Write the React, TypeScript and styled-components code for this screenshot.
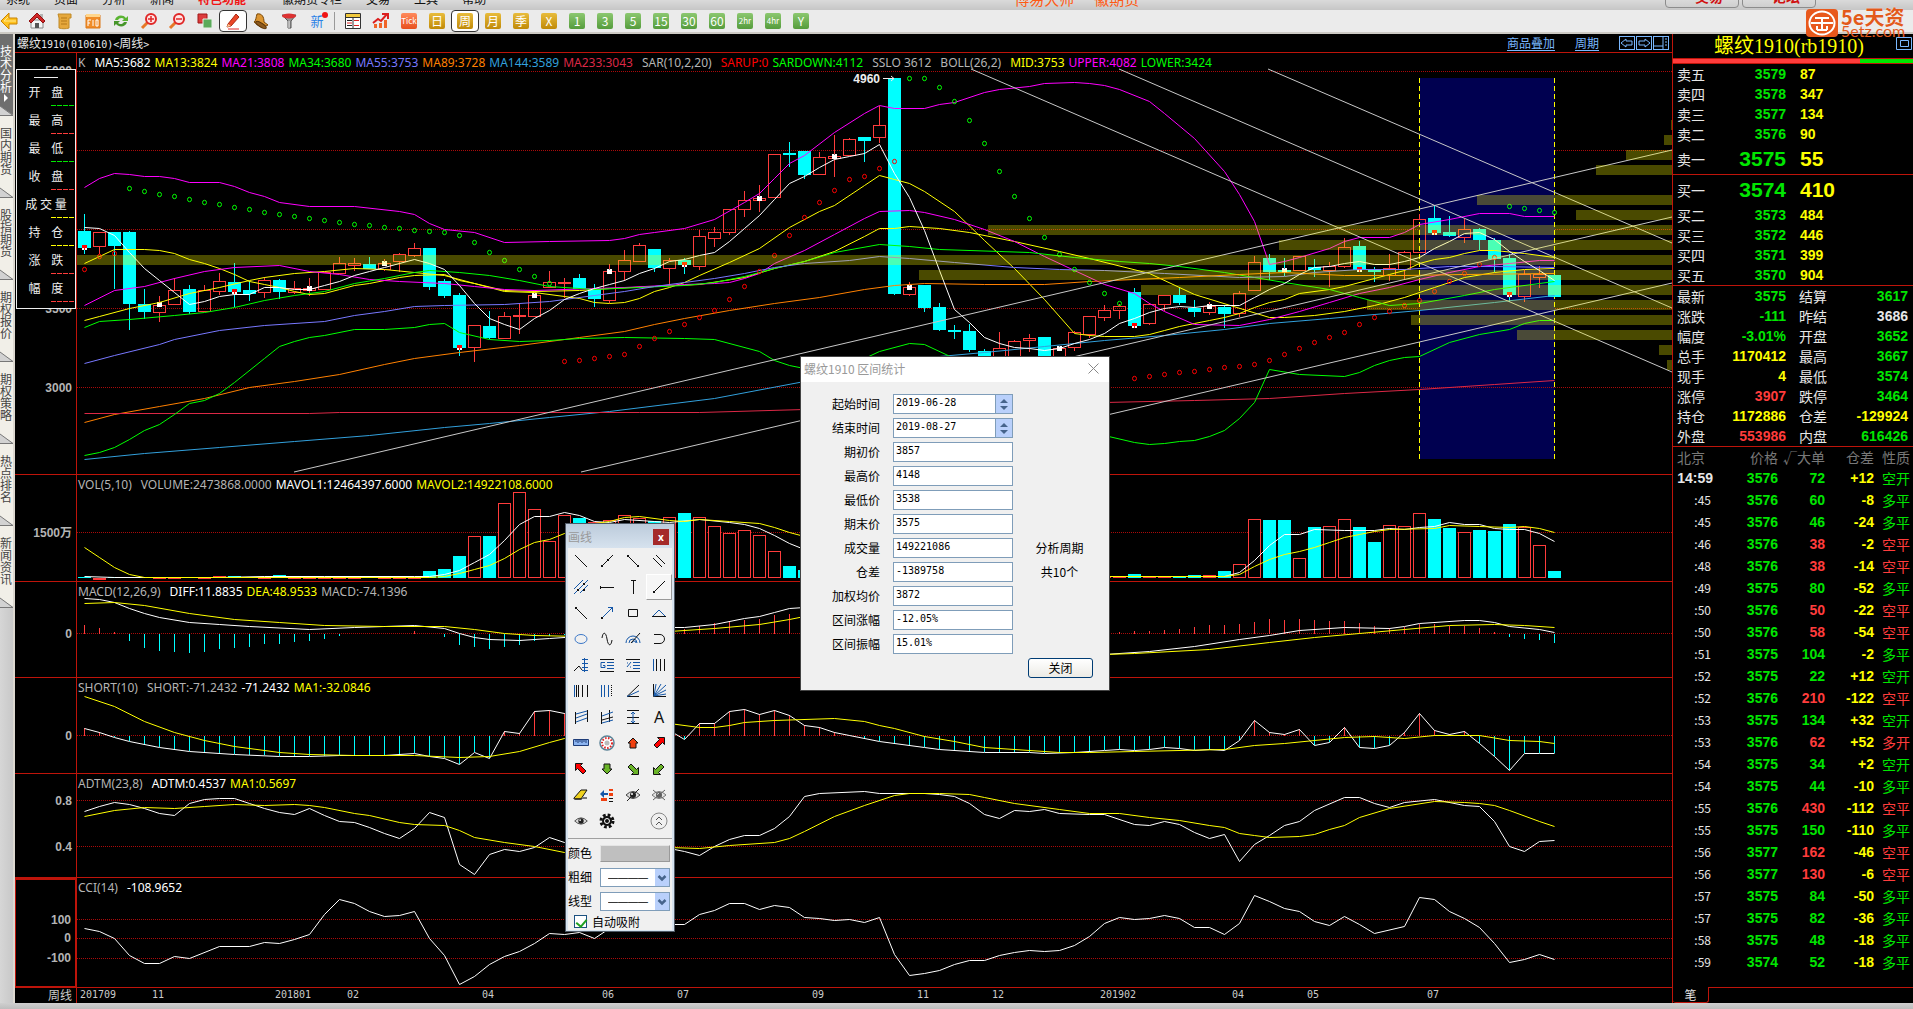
import React from "react";
import styled, { createGlobalStyle, css } from "styled-components";

const CJK = '"Noto Sans CJK SC", "Noto Sans", sans-serif';
const MONO = '"DejaVu Sans Mono", "Noto Sans CJK SC", monospace';
const LATIN = '"Noto Sans", "Noto Sans CJK SC", sans-serif';
const DIGITS = '"Liberation Sans", "Noto Sans CJK SC", sans-serif';

const RED = "#be140a";
const UP = "#ff3c3c";
const DOWN = "#00ffff";
const GREEN = "#00e600";
const YELLOW = "#ffff00";
const WHITE = "#e6e6e6";
const GREY = "#b4b4b4";
const BLUE = "#1457a8";

const Global = createGlobalStyle`
  * { box-sizing: border-box; }
  html, body, #root { height: 100%; }
  body { margin: 0; background: #c8c8c8; font: 12px/16px ${CJK}; overflow: hidden; }
  button, input, select { font: inherit; margin: 0; padding: 0; border-radius: 0; }
  svg { display: block; }
`;

/* ---------- shell ---------- */

const Shell = styled.div`
  position: relative;
  display: flex;
  flex-direction: column;
  height: 100vh;
  background: #c8c8c8;
`;

const Body = styled.div`
  display: flex;
  flex: 1;
  min-height: 0;
`;

const StatusBar = styled.footer`
  height: 6px;
  background: linear-gradient(#cfcfcf, #bdbdbd);
`;

/* ---------- menu ---------- */

const MenuBar = styled.nav`
  display: flex;
  align-items: flex-end;
  height: 10px;
  overflow: hidden;
  padding: 0 97px 3px 6px;
  background: linear-gradient(#dadada, #c6c6c6);
`;

const MenuItem = styled.a<{ $color?: string; $bold?: boolean; $gap?: number; $size?: number }>`
  flex: none;
  margin-right: ${(p) => p.$gap ?? 24}px;
  font-size: ${(p) => p.$size ?? 12}px;
  line-height: 16px;
  font-weight: ${(p) => (p.$bold ? 700 : 400)};
  color: ${(p) => p.$color ?? "#111"};
  text-decoration: none;
`;

const Brand = styled.div`
  display: flex;
  flex: 1;
  margin-left: 528px;
`;

const MenuButton = styled.button`
  flex: none;
  width: 74px;
  height: 22px;
  margin: 0 0 -1px 3px;
  border: 1px solid #8c8c8c;
  border-radius: 4px;
  background: linear-gradient(#eee, #cfcfcf);
  color: #d01010;
  font-size: 14px;
  font-weight: 700;
  line-height: 12px;
  padding: 0 0 2px 14px;
`;

/* ---------- toolbar ---------- */

const Toolbar = styled.div`
  display: flex;
  align-items: center;
  height: 24px;
  padding-bottom: 0;
  margin-left: -5px;
  background: #ebebeb;
  border-bottom: 2px solid #cdcac4;
`;

const ToolButton = styled.button<{ $on?: boolean }>`
  flex: none;
  display: grid;
  place-items: center;
  width: 28px;
  height: 22px;
  background: ${(p) => (p.$on ? "#fff" : "transparent")};
  border: ${(p) => (p.$on ? "1px solid #333" : "0")};
  border-radius: 4px;
`;

const badge = {
  red: "linear-gradient(#ff8a5c, #e8501e)",
  gold: "linear-gradient(#e8bc3c, #c08a08)",
  green: "linear-gradient(#8cc870, #559c3c)",
};

const Badge = styled.span<{ $tone: keyof typeof badge; $small?: boolean }>`
  width: 16px;
  height: 16px;
  border-radius: 2px;
  background: ${(p) => badge[p.$tone]};
  color: #fff;
  text-align: center;
  font: ${(p) => (p.$small ? 8 : 12)}px/16px ${CJK};
`;

const ToolSeparator = styled.span`
  flex: none;
  width: 1px;
  height: 18px;
  margin: 0 4px 0 3px;
  background: #999;
`;

/* ---------- sidebar ---------- */

const Sidebar = styled.nav`
  flex: none;
  width: 15px;
  border-right: 2px solid #dcd8d0;
  background: linear-gradient(90deg, #d6d6d6, #c8c8c8);
`;

const SideTab = styled.button<{ $on?: boolean }>`
  display: flex;
  flex-direction: column;
  align-items: flex-start;
  width: 13px;
  height: 82px;
  padding-top: 11px;
  border: 0;
  background: ${(p) => (p.$on ? "#6e6e6e" : "#f1efe8")};
  color: ${(p) => (p.$on ? "#fff" : "#444")};
  font-size: 12px;
  line-height: 12px;
  overflow: hidden;
  & > svg { flex: none; margin-top: auto; }
`;

/* ---------- chart ---------- */

const ChartArea = styled.main`
  display: grid;
  flex: 1;
  min-width: 0;
  grid-template-rows: 19px minmax(0, 422fr) minmax(0, 107fr) minmax(0, 96fr) minmax(0, 96fr) minmax(0, 104fr) minmax(0, 110fr) 15px;
  background: #000;
`;

const ChartHeader = styled.header`
  display: flex;
  align-items: center;
  padding: 0 2px;
  border-bottom: 1px solid ${RED};
  color: ${WHITE};
  white-space: nowrap;
`;

const ChartTitle = styled.h1`
  flex: 1;
  margin: 0;
  font: 12px/18px ${CJK};
`;

const Mono = styled.span`
  font: 10px/12px ${MONO};
`;

const HeaderLink = styled.a`
  margin-right: 20px;
  color: #7ab8ff;
  line-height: 14px;
  text-underline-offset: 2px;
`;

const NavButton = styled.button`
  width: 16px;
  height: 14px;
  margin-right: 1px;
  border: 1px solid #7ab8ff;
  background: transparent;
`;

const PanelRow = styled.section`
  display: grid;
  grid-template-columns: 62px minmax(0, 1fr);
  border-bottom: 1px solid ${RED};
  min-height: 0;
`;

const AxisCell = styled.div<{ $on?: boolean }>`
  position: relative;
  border-right: 1px solid ${RED};
  ${(p) => p.$on && css`border: 2px solid ${RED}; border-width: 2px 2px 1px 1px;`}
`;

const AxisLabel = styled.span`
  position: absolute;
  right: 4px;
  transform: translateY(-50%);
  color: ${GREY};
  font: 700 12px/14px ${DIGITS};
`;

const PlotCell = styled.div`
  position: relative;
  min-width: 0;
  min-height: 0;
`;

const Plot = styled.svg`
  position: absolute;
  inset: 0;
  width: 100%;
  height: 100%;
`;

const Legend = styled.p`
  position: relative;
  display: flex;
  gap: 4px;
  margin: 0;
  padding-left: 1px;
  font: 12px/19px ${LATIN};
  white-space: nowrap;
`;

const LegendItem = styled.span<{ $color: string; $wide?: boolean }>`
  color: ${(p) => p.$color};
  margin-right: ${(p) => (p.$wide ? 5 : 0)}px;
`;

const TimeRow = styled.div`
  display: grid;
  grid-template-columns: 62px minmax(0, 1fr);
  color: #ccc;
`;

const TimeUnit = styled.div`
  border-right: 1px solid ${RED};
  padding-right: 4px;
  text-align: right;
  line-height: 14px;
`;

const TimeScale = styled.div`
  position: relative;
`;

const TimeLabel = styled.span`
  position: absolute;
  top: 0;
  font: 10px/14px ${MONO};
`;

/* Floating read-out for the bar under the cursor */
const Readout = styled.aside`
  position: absolute;
  z-index: 2;
  left: 16px;
  top: 69px;
  width: 60px;
  height: 240px;
  border: 1px solid #eee;
  background: #000;
  color: #eee;
`;

const ReadoutDate = styled.div`
  height: 8px;
  margin: 0 17px;
  border-bottom: 1px solid #eee;
`;

const ReadoutRow = styled.div<{ $color: string }>`
  position: relative;
  height: 28px;
  line-height: 28px;
  text-align: center;
  white-space: pre;
  &::after {
    content: "";
    position: absolute;
    right: 0;
    bottom: 0;
    width: 24px;
    height: 1px;
    background: repeating-linear-gradient(90deg, ${(p) => p.$color} 0 5px, #000 5px 6px);
  }
`;

/* ---------- quotes ---------- */

const QuotePanel = styled.aside`
  display: flex;
  flex-direction: column;
  flex: none;
  width: 241px;
  border-left: 1px solid ${RED};
  background: #000;
  color: ${WHITE};
`;

const QuoteTitle = styled.h2`
  display: flex;
  align-items: center;
  justify-content: flex-end;
  gap: 32px;
  height: 25px;
  margin: 0;
  border-bottom: 1px solid ${RED};
  color: ${YELLOW};
  font: 20px/24px "Liberation Serif", "Noto Sans CJK SC", serif;
  & > svg { margin-top: -6px; }
`;

const RatioBar = styled.div`
  display: flex;
  height: 5px;
  border-bottom: 1px solid ${RED};
  background: ${GREEN};
`;

const RatioSell = styled.div`
  width: 78%;
  background: ${UP};
`;

const Table = styled.table`
  width: 100%;
  table-layout: fixed;
  border-collapse: collapse;
`;

const BookTable = styled(Table)`
  border-bottom: 1px solid ${RED};
`;

const Cell = styled.td<{ $color?: string; $left?: boolean; $pad?: number; $big?: boolean; $tall?: boolean }>`
  height: ${(p) => (p.$big ? 30 : p.$tall ? 22 : 20)}px;
  padding: 0 0 0 ${(p) => p.$pad ?? 0}px;
  color: ${(p) => p.$color ?? WHITE};
  font: 700 ${(p) => (p.$big ? 21 : 14)}px/20px ${DIGITS};
  text-align: ${(p) => (p.$left ? "left" : "right")};
`;

const EndCell = styled(Cell)`
  padding-right: 5px;
`;

const HeadCell = styled.th<{ $left?: boolean; $pad?: number; $dim?: boolean }>`
  padding: 0 0 0 ${(p) => p.$pad ?? 4}px;
  color: ${(p) => (p.$dim ? "#787878" : WHITE)};
  font: 400 14px/20px ${CJK};
  text-align: ${(p) => (p.$left ? "left" : "right")};
  white-space: nowrap;
`;

const TimeCell = styled.td`
  padding: 0 2px 0 0;
  font: 12px/22px ${CJK};
  text-align: right;
`;

const KindCell = styled.td<{ $color: string }>`
  padding: 0 0 0 8px;
  color: ${(p) => p.$color};
  font: 14px/20px ${CJK};
`;

const QuoteTabs = styled.div`
  display: flex;
  height: 16px;
  margin-top: auto;
`;

const QuoteTab = styled.button`
  width: 36px;
  border: 1px solid ${RED};
  border-width: 0 1px 1px 0;
  border-radius: 0 0 3px 3px;
  background: #000;
  color: ${WHITE};
  font-size: 12px;
  line-height: 14px;
`;

const TabRule = styled.div`
  flex: 1;
  border-top: 1px solid ${RED};
`;

/* ---------- logo ---------- */

const Logo = styled.div`
  position: absolute;
  z-index: 3;
  top: 9px;
  right: 5px;
  display: flex;
  gap: 3px;
  color: #e25a1c;
`;

const LogoText = styled.div`
  width: 67px;
  white-space: nowrap;
  font: 700 20px/16px ${CJK};
  text-shadow: 0 0 1px #fff;
`;

const LogoUrl = styled.div`
  font: 16px/12px "Lato", sans-serif;
`;

/* ---------- drawing palette ---------- */

const Palette = styled.aside`
  position: absolute;
  z-index: 4;
  left: 565px;
  top: 523px;
  width: 110px;
  border: 1px solid #4f5a66;
  background: #d6e2ee;
  padding: 0 2px 1px;
  color: #000;
`;

const PaletteTitle = styled.header`
  display: flex;
  align-items: center;
  justify-content: space-between;
  height: 24px;
  padding: 1px 5px 0 2px;
  margin: 0 -2px;
  background: linear-gradient(#bccbdb, #d6e2ee);
  color: #999;
`;

const PaletteClose = styled.button`
  width: 16px;
  height: 16px;
  border: 0;
  background: #a52a2a;
  color: #fff;
  font: 700 10px/14px ${LATIN};
`;

const PaletteBody = styled.div`
  background: #f0f0f0;
`;

const ToolGrid = styled.div`
  display: grid;
  grid-template-columns: repeat(4, 26px);
  grid-auto-rows: 26px;
  margin-bottom: 2px;
  border-bottom: 1px solid #a0a0a0;
  height: 291px;
`;

const DrawButton = styled.button<{ $on?: boolean }>`
  display: grid;
  place-items: center;
  border: 1px solid transparent;
  background: transparent;
  ${(p) => p.$on && css`border-color: #fff #999 #999 #fff; background: #f6f6f6;`}
`;

const Field = styled.label`
  display: flex;
  align-items: center;
  justify-content: space-between;
  height: 24px;
  padding-right: 2px;
`;

const Swatch = styled.button`
  width: 70px;
  height: 17px;
  border: 1px solid #aaa;
  border-color: #e4e4e4 #999 #999 #e4e4e4;
  background: #bfbfbf;
`;

const SelectBox = styled.span`
  position: relative;
  width: 70px;
  height: 19px;
  & > select {
    appearance: none;
    width: 100%;
    height: 100%;
    padding-left: 7px;
    border: 1px solid #7f9db9;
    background: #fff;
    font: 10px/17px "Liberation Sans", sans-serif;
    color: #000;
  }
  & > svg {
    position: absolute;
    top: 1px;
    right: 1px;
    pointer-events: none;
  }
`;

const CheckField = styled.label`
  display: flex;
  align-items: center;
  gap: 5px;
  height: 17px;
  padding-left: 6px;
  & > input {
    appearance: none;
    position: relative;
    width: 13px;
    height: 13px;
    border: 1px solid #1c5180;
    background: #fff;
  }
  & > input:checked::after {
    content: "";
    position: absolute;
    left: 3px;
    top: 1px;
    width: 5px;
    height: 8px;
    border: solid #21a121;
    border-width: 0 2px 2px 0;
    transform: rotate(40deg);
  }
`;

/* ---------- interval dialog ---------- */

const Dialog = styled.section`
  position: absolute;
  z-index: 5;
  left: 800px;
  top: 356px;
  width: 310px;
  border: 1px solid #444;
  background: #f0f0f0;
  color: #000;
`;

const DialogTitle = styled.header`
  display: flex;
  align-items: center;
  justify-content: space-between;
  height: 25px;
  padding: 0 10px 2px 3px;
  background: #fff;
  color: #999;
`;

const CloseButton = styled.button`
  border: 0;
  background: transparent;
`;

const DialogForm = styled.form`
  padding: 12px 16px 12px 0;
`;

const FormGrid = styled.div`
  display: grid;
  grid-template-columns: 79px 120px 1fr;
  grid-auto-rows: 20px;
  gap: 4px 13px;
  align-items: center;
`;

const FormLabel = styled.label`
  text-align: right;
`;

const FormField = styled.div`
  display: flex;
  height: 20px;
  border: 1px solid #7f9db9;
  background: #fff;
  & > input {
    flex: 1;
    min-width: 0;
    border: 0;
    padding: 0 0 2px 2px;
    background: transparent;
    font: 10px/16px ${MONO};
  }
`;

const Spinner = styled.button`
  width: 17px;
  border: 0;
  border-left: 1px solid #7f9db9;
  background: #b9d0fb;
`;

const Side = styled.span`
  text-align: center;
`;

const DialogActions = styled.div`
  display: flex;
  justify-content: flex-end;
  padding-top: 4px;
`;

const OkButton = styled.button`
  width: 65px;
  height: 20px;
  border: 1px solid #003c74;
  border-radius: 3px;
  background: linear-gradient(#fff, #ecebe5);
  line-height: 16px;
`;

/* ---------- chart data ---------- */

/* Bars are 15 units apart; the plot coordinates start at x = 77. */
const X0 = 84.5;
const STEP = 15;
const bx = (i: number) => X0 + STEP * i;
const parse = (s: string) => s.trim().split(/\s+/).map((p) => p.split(",").map(Number));

/* one bar: direction, body top, body bottom, high, low */
const CANDLES = `d231,248,214,254 u232,246,232,254 d232,246,232,289 d232,304,231,330 d304,312,289,319 u305,312,296,322 u290,304,278,304 d289,312,285,314 u290,311,285,311 u281,291,273,295
d282,292,263,307 d290,294,281,301 u280,292,277,298 d280,292,279,299 u288,292,281,294 u288,290,278,296 u272,289,272,289 u263,273,257,274 u263,265,258,271 d264,269,257,269
u263,269,259,271 u254,261,253,272 u248,255,243,257 d248,287,248,290 d281,296,279,298 d295,348,293,356 u325,347,325,362 d326,338,311,339 u316,338,312,339 u315,316,303,334
u295,316,290,316 u282,287,271,288 u282,283,278,298 d278,289,274,289 d289,299,284,307 u271,300,264,303 u260,271,250,281 u245,261,243,261 d249,268,249,272 u260,268,258,286
d260,265,258,274 u236,266,230,270 u232,238,227,247 u209,232,209,235 u200,209,191,217 u198,200,185,212 u154,197,154,197 d153,155,142,167 d151,175,151,179 u157,174,152,174
u156,158,135,177 u139,155,138,155 d137,141,137,162 u125,137,106,143 d78,294,78,295 u287,294,282,296 d285,308,285,312 d307,330,303,331 d330,331,325,339 d331,350,324,352
d351,372,349,375 u348,372,332,374 u341,360,340,372 u338,340,334,352 d337,372,337,374 u348,362,346,364 u332,347,331,351 u316,334,316,338 u310,317,305,321 u306,310,304,319
d292,326,288,327 u304,323,303,325 u295,304,295,311 d295,303,288,305 d308,312,300,317 u306,312,302,315 d307,314,305,328 u293,313,291,317 u262,290,256,290 d258,272,254,280
d270,271,258,276 u256,270,256,270 d267,270,259,277 u266,270,262,287 u247,266,238,268 d246,270,241,272 d270,272,267,282 u268,275,254,281 u252,269,251,279 u219,252,214,252
d218,233,205,233 d232,236,216,237 u229,237,219,243 d229,240,228,250 d240,259,238,272 d258,295,254,302 u274,296,270,302 u274,277,266,288 d275,297,275,297`
  .trim()
  .split(/\s+/)
  .map((s) => ({ up: s[0] === "u", v: s.slice(1).split(",").map(Number) }));

const PRICE_LINES: [string, string][] = [
  [YELLOW, "0,263 1,256 2,249 4,249 5,250 6,253 7,259 8,263 9,268 10,274 11,281 12,284 13,287 14,291 15,294 16,293 17,289 18,285 19,283 20,280 21,277 22,275 24,274 25,280 26,283 27,287 28,291 30,292 32,296 33,298 34,302 35,303 36,302 37,298 38,291 39,287 40,282 41,275 43,262 45,248 47,227 49,211 50,205 52,185 53,175 54,179 55,183 56,191 58,211 60,240 62,268 64,299 66,333 67,335 68,336 70,336 71,334 72,330 73,326 74,323 75,320 76,317 77,313 78,307 79,302 80,299 81,293 83,289 84,286 86,278 87,274 88,270 89,263 90,259 91,257 92,253 93,250 94,250 96,253 98,257"],
  [YELLOW, "0,320 1,316 3,308 5,302 7,293 9,287 11,280 12,277 14,273 16,271 18,268 20,269 22,272 24,275 26,283 28,290 30,291 33,290 35,288 38,286 41,284 44,277 46,268 48,261 50,251 52,236 53,228 54,228 55,226 57,228 59,232 62,241 65,251 67,258 71,273 74,294 79,317 80,317 82,315 84,311 86,305 88,297 90,287 92,277 94,272 96,269 98,268"],
  ["#ff00ff", "0,305 2,290 4,286 6,278 8,271 10,267 13,265 15,271 17,274 19,279 21,281 24,283 26,286 28,289 30,290 36,287 40,284 42,283 43,282 44,278 45,273 46,263 48,250 50,234 52,218 53,211 55,210 56,212 58,219 60,229 62,241 64,256 66,270 68,284 70,293 71,303 72,311 74,324 77,325 79,319 81,311 83,302 85,293 87,287 89,279 91,272 93,266 95,263 97,260 98,260"],
  ["#ff00ff", "0,187 1,178 2,173 3,174 4,176 5,176 6,178 7,182 9,182 10,186 11,192 12,196 13,202 15,206 18,206 21,211 22,214 23,223 24,229 26,232 28,242 31,241 35,240 36,238 37,234 38,232 40,228 42,219 44,202 45,193 46,178 47,163 48,155 50,132 52,113 53,105 54,108 56,108 57,104 58,102 60,92 61,89 63,86 64,83 66,82 67,83 68,85 69,89 71,101 72,113 74,138 76,171 77,194 78,221 79,264 80,261 81,257 83,248 84,241 85,237 87,237 88,232 89,224 91,219 93,213 95,213 96,216 98,216"],
  ["#00ff00", "0,327 1,321 3,319 6,315 8,312 10,307 12,300 14,295 16,291 18,283 20,278 22,272 23,270 25,272 27,275 29,280 31,286 34,289 37,287 40,285 42,282 44,276 46,268 48,261 50,252 53,244 55,246 57,249 61,251 63,252 66,257 69,261 71,263 73,266 76,272 78,277 80,282 83,289 85,297 87,305 89,303 92,295 94,289 97,283 98,281"],
  ["#7878ff", "0,363 2,355 5,344 6,339 9,330 12,325 16,321 18,315 20,311 22,306 24,305 28,304 31,301 34,295 36,291 38,286 40,282 42,278 44,273 46,267 48,263 51,260 53,256 55,258 58,262 62,267 65,269 68,270 72,273 77,277 80,276 82,272 85,269 88,269 91,266 94,266 98,267"],
  ["#ff8000", "0,422 2,414 5,406 8,398 11,387 14,381 17,374 20,364 22,358 25,352 29,345 33,337 36,331 38,324 40,318 43,310 46,303 49,297 52,289 54,285 56,283 60,284 64,284 67,281 73,277 77,274 80,272 84,275 88,275 92,274 98,273"],
  ["#32a0dc", "0,459 4,453 9,447 14,441 19,435 24,427 27,423 31,417 35,411 42,398 48,381 57,356 60,352 64,346 68,340 72,335 76,329 79,323 83,318 89,310 94,302 98,295"],
  ["#dc2846", "0,413 15,413 17,412 37,412 41,412 48,409 68,402 74,400 79,398 84,393 89,389 94,384 98,380"],
  ["#00ff00", "0,455 1,452 2,447 3,439 4,430 5,424 6,414 7,403 8,400 9,393 10,382 12,358 13,346 14,341 15,337 16,335 18,329 20,329 22,327 23,324 24,323 25,332 27,339 29,341 31,340 33,338 36,337 40,338 42,339 45,351 46,360 47,365 48,368 50,366 52,358 53,351 55,343 56,344 58,358 62,385 66,420 68,435 70,442 71,444 72,443 73,441 74,440 75,436 76,430 77,418 78,402 79,369 81,374 84,376 85,372 86,365 87,360 88,357 89,356 91,342 93,334 95,329 96,323 97,320 98,320"],
  ["#ffffff", "0,227 1,228 2,235 3,252 4,268 5,280 6,292 7,304 8,301 9,296 10,294 11,294 12,287 13,287 14,289 15,289 16,285 17,281 18,275 19,271 20,267 21,263 22,259 23,263 24,269 25,285 26,303 27,318 28,324 29,329 30,318 31,310 32,299 33,293 34,288 35,284 36,280 37,273 38,268 39,261 40,259 41,255 42,252 43,241 44,228 45,215 46,199 47,183 48,176 49,167 50,159 51,156 52,153 53,144 54,173 55,197 56,230 57,270 58,309 59,322 60,337 61,343 62,347 63,348 64,350 65,348 66,343 67,339 68,333 69,323 70,318 71,312 72,308 73,306 74,307 75,305 77,305 78,297 79,289 80,283 81,274 82,267 83,266 84,263 85,261 86,264 87,264 88,261 89,257 90,248 91,241 92,233 93,232 94,239 95,251 96,261 97,270 98,280"],
];

/* Parabolic stop values per run: start bar, side, heights */
const SAR: [number, string, number[]][] = [
  [0, "#ff0000", [269, 256, 253]],
  [3, "#00ff00", [188, 191, 194, 196, 199, 202, 204, 207, 209, 212, 214, 216, 218, 220, 222, 224, 225, 227, 228, 230, 231, 232, 235, 242, 252, 260, 269, 276, 283]],
  [32, "#ff0000", [361, 360, 358, 356, 354, 346, 338, 331, 324, 317, 310, 299, 286, 271, 255, 235, 217, 202, 190, 179, 176, 168, 161]],
  [55, "#00ff00", [78, 78, 87, 101, 120, 143, 171, 196, 218, 237, 254, 269, 282, 293, 303]],
  [70, "#ff0000", [378, 376, 374, 372, 371, 369, 367, 366, 364, 360, 354, 348, 342, 337, 332, 324, 317, 311, 305, 300, 291, 281, 273, 264, 257]],
  [95, "#00ff00", [206, 208, 210, 212]],
];

const MARKS: [number, number, boolean][] = [
  [0, 247, true], [5, 304, false], [10, 291, true], [15, 288, false], [20, 263, false], [30, 295, false], [25, 347, true],
  [35, 271, false], [40, 264, true], [45, 198, false], [50, 156, false], [55, 287, false], [65, 348, false],
  [70, 325, true], [75, 306, false], [80, 270, false], [85, 269, true], [90, 232, true], [95, 294, true],
];

/* Volume profile: left edge and top of each stripe */
const PROFILE = [
  [1671, 120], [1664, 135], [1626, 150], [1596, 165], [1477, 195], [1576, 210], [988, 225], [1279, 240],
  [77, 255], [919, 270], [1141, 285], [1367, 300], [1411, 315], [1517, 330], [1659, 345], [1667, 360],
];

const TRENDS = [
  [294, 472, 1672, 150], [581, 472, 1672, 217], [863, 472, 1672, 283],
  [971, 69, 1672, 372], [1119, 69, 1672, 308], [1268, 69, 1672, 243],
];

const VOLUME = `d577 u578 d577 d577 d577 u577 u577 d577 u577 u576 d576 d577 u577 d575 u577 u577 u577 u577 u577 d577 u577 u577 u577 d571 d569 d556 u536 d536 u503 u492 u509 u541 u515 d518 u522 u520 u515 u518 d521 u517 d513 u517 u526 u533 u530 u535 u551 d566 d570 u572
u574 d574 u575 u575 d575 u576 d576 u576 d576 u576 d576 u576 d576 u576 d576 u576 u576 u576 u576 u576 d574 u576 u576 d576 d575 u575 d571 u564 u519 d520 d520 u558 d527 u526 u519 d527 d542 u525 u526 u513 d519 d528 u532 d530 d531 d524 u527 u545 d571`
  .trim()
  .split(/\s+/)
  .map((s) => ({ up: s[0] === "u", y: Number(s.slice(1)) }));

const MACD_BARS = [625, 628, 632, 641, 648, 651, 652, 653, 652, 649, 648, 647, 644, 644, 642, 641, 639, 636, 634, 634, 634, 634, 631, 634, 637, 645, 647, 649, 647, 645, 641, 636, 635, 635, 635, 634, 633, 632, 631, 630, 629, 626, 623, 622, 620, 619, 615, 614, 614, 614, 615, 617, 620, 622, 630, 640, 645, 648, 650, 652, 652, 650, 648, 646, 644, 642, 640, 636, 633, 632, 631, 631, 630, 629, 627, 625, 625, 624, 622, 619, 620, 619, 620, 621, 621, 623, 626, 628, 627, 624, 624, 626, 626, 628, 632, 637, 639, 640, 643];

const SHORT_LINE = "0,728 1,732 2,737 3,741 5,747 7,751 10,754 13,756 15,756 17,755 20,755 22,753 23,756 24,758 25,764 26,752 27,758 28,731 29,733 30,711 31,710 32,713 34,720 37,722 39,730 40,739 41,723 42,723 43,711 44,709 45,714 46,710 47,715 48,725 49,727 50,732 51,735 53,741 56,747 57,749 60,752 63,752 64,753 66,752 68,750 69,749 70,750 71,749 72,747 73,748 74,750 75,749 76,750 77,740 78,720 79,732 80,734 81,729 82,745 83,742 84,727 85,747 86,748 87,745 88,732 89,713 90,730 91,734 92,731 93,743 94,756 95,770 96,753 97,753 98,753";

/* Linear interpolation between the stored vertices */
function valueAt(points: number[][], i: number) {
  const k = points.findIndex((p) => p[0] >= i);
  if (k <= 0) return points[0][1];
  const [a, b] = [points[k - 1], points[k]];
  return a[1] + ((b[1] - a[1]) * (i - a[0])) / (b[0] - a[0]);
}

const TIMES: [number, string][] = [
  [80, "201709"], [152, "11"], [275, "201801"], [347, "02"], [482, "04"], [602, "06"], [677, "07"], [812, "09"],
  [917, "11"], [992, "12"], [1100, "201902"], [1232, "04"], [1307, "05"], [1427, "07"],
];

/* ---------- chart drawing ---------- */

const LEFT = 77;
const SPAN = 1595;

const Line = ({ color, data }: { color: string; data: string }) => (
  <polyline fill="none" stroke={color} points={parse(data).map(([i, y]) => `${bx(i)},${y + 0.5}`).join(" ")} />
);

const Bar = ({ i, y, base, up }: { i: number; y: number; base: number; up: boolean }) =>
  up ? (
    <rect x={bx(i) - 6} y={y + 0.5} width={12} height={Math.max(1, base - y - 1)} fill="#000" stroke={UP} />
  ) : (
    <rect x={bx(i) - 6.5} y={y} width={13} height={Math.max(1, base - y)} fill={DOWN} />
  );

const Stem = ({ i, y, base }: { i: number; y: number; base: number }) => (
  <line x1={bx(i)} x2={bx(i)} y1={base} y2={y} stroke={y < base ? UP : DOWN} />
);

type PanelProps = {
  top: number;
  height: number;
  axis?: [number, string][];
  grid: number[];
  legend: [string, string, boolean?][];
  active?: boolean;
  children?: React.ReactNode;
};

const Panel = ({ top, height, axis = [], grid, legend, active, children }: PanelProps) => (
  <PanelRow>
    <AxisCell $on={active}>
      {axis.map(([y, text]) => (
        <AxisLabel key={text} style={{ top: `${((y - top) / height) * 100}%` }}>{text}</AxisLabel>
      ))}
    </AxisCell>
    <PlotCell>
      <Plot viewBox={`${LEFT} ${top} ${SPAN} ${height}`} preserveAspectRatio="none" aria-hidden="true">
        {grid.map((y) => (
          <line key={y} x1={LEFT} x2={LEFT + SPAN} y1={y + 0.5} y2={y + 0.5} stroke="#aa0a0a" strokeDasharray="1 1" shapeRendering="crispEdges" />
        ))}
        {children}
      </Plot>
      <Legend>
        {legend.map(([text, color, wide]) => (
          <LegendItem key={text} $color={color} $wide={wide}>{text}</LegendItem>
        ))}
      </Legend>
    </PlotCell>
  </PanelRow>
);

const PricePlot = () => (
  <>
    <rect x={1420} y={78} width={135} height={381} fill="#000050" />
    <g stroke={YELLOW} strokeDasharray="5 3" shapeRendering="crispEdges">
      <line x1={1419.5} x2={1419.5} y1={78} y2={459} />
      <line x1={1554.5} x2={1554.5} y1={78} y2={459} />
    </g>
    <line x1={LEFT} x2={LEFT + SPAN} y1={387.5} y2={387.5} stroke="#aa0a0a" strokeDasharray="1 1" shapeRendering="crispEdges" />
    <g shapeRendering="crispEdges">
      {CANDLES.map(({ up, v: [t, b, hi, lo] }, i) => (
        <g key={i}>
          <line x1={bx(i)} x2={bx(i)} y1={hi} y2={t} stroke={up ? UP : DOWN} />
          <line x1={bx(i)} x2={bx(i)} y1={b} y2={lo} stroke={up ? UP : DOWN} />
          {up ? (
            <rect x={bx(i) - 6} y={t + 0.5} width={12} height={Math.max(1, b - t)} fill="none" stroke={UP} />
          ) : (
            <rect x={bx(i) - 6.5} y={t} width={13} height={Math.max(2, b - t)} fill={DOWN} />
          )}
        </g>
      ))}
      {MARKS.map(([i, y, red]) => (
        <g key={i}>
          <rect x={bx(i) - 2.5} y={y - 2} width={5} height={5} fill="#fff" />
          <rect x={bx(i) - 0.5} y={y + (red ? 1 : -2)} width={1} height={red ? 2 : 1} fill={red ? "#f00" : "#777"} />
          {red && <rect x={bx(i) - 2.5} y={y - 2} width={5} height={3} fill="#f00" />}
        </g>
      ))}
    </g>
    {PRICE_LINES.map(([color, data], k) => <Line key={k} color={color} data={data} />)}
    {SAR.map(([start, color, ys]) =>
      ys.map((y, k) => <ellipse key={`${start}-${k}`} cx={bx(start + k)} cy={y + 0.5} rx={2} ry={2.2} fill="none" stroke={color} />)
    )}
    <g stroke="#c8c8c8">
      {TRENDS.map(([x1, y1, x2, y2]) => <line key={`${x1}-${y2}`} x1={x1} y1={y1} x2={x2} y2={y2} />)}
    </g>
    <g fill="#ffff00" fillOpacity={0.29}>
      {PROFILE.map(([x, y]) => <rect key={y} x={x} y={y} width={1672 - x} height={10} />)}
    </g>
    <text x={880} y={83} textAnchor="end" fill="#eee" fontFamily="Liberation Sans, sans-serif" fontWeight={700} fontSize={12}>4960</text>
    <path d="M883 78.5h11M891 76l3 2.5-3 2.5" fill="none" stroke="#eee" />
  </>
);

const shortPoints = parse(SHORT_LINE);

/* ---------- toolbar icons ---------- */

const Icon = ({ children, size = 18 }: { children: React.ReactNode; size?: number }) => (
  <svg width={size} height={size} viewBox="0 0 18 18" aria-hidden="true">{children}</svg>
);

const toolIcons: [string, React.ReactNode][] = [
  ["后退", <><path d="M9 1 1 9l8 8v-5h8V6H9z" fill="#ffc21e" stroke="#c88200" /><path d="M8 5 4 9h12" stroke="#ffe890" fill="none" /></>],
  ["首页", <><path d="M3 8h12v8H3z" fill="#f4f4f4" stroke="#888" /><path d="M12 2h3v4h-3z" fill="#b4b4b4" /><path d="M1 9 9 1l8 8-2 2-6-6-6 6z" fill="#d02828" stroke="#901010" /><path d="M7 11h4v5H7z" fill="#555" /></>],
  ["公告", <><path d="M2 2h13v4h-2v10c-3 1-7 1-10 0V6z" fill="#e6a83c" stroke="#c08a28" /><path d="M5 6h6M5 9h6M5 12h6" stroke="#b47818" /></>],
  ["F10", <><path d="M2 3h14v13H2z" fill="#f08c28" stroke="#dc7818" /><path d="M2 2h14v3H2z" fill="#ffd68c" /><path d="M4 8v6M4 8h3M4 11h2M9 8v6M12 8h2v6h-2z" stroke="#fff" fill="none" /></>],
  ["刷新", <><path d="M3 8c1-5 8-6 11-2l2-2v5h-6l2-2c-2-2-5-1-6 1z" fill="#5ab432" /><path d="M15 10c-1 5-8 6-11 2l-2 2V9h6l-2 2c2 2 5 1 6-1z" fill="#46962a" /></>],
  ["放大", <><path d="m8 10-6 6" stroke="#e67828" strokeWidth="3" /><circle cx="11" cy="7" r="5" fill="#ffe6e6" stroke="#e02828" strokeWidth="2" /><path d="M8 7h6M11 4v6" stroke="#e02828" strokeWidth="1.5" /></>],
  ["缩小", <><path d="m8 10-6 6" stroke="#e67828" strokeWidth="3" /><circle cx="11" cy="7" r="5" fill="#ffe6e6" stroke="#e02828" strokeWidth="2" /><path d="M8 7h6" stroke="#e02828" strokeWidth="1.5" /></>],
  ["叠加", <><path d="M2 2h9v9H2z" fill="#dc3c3c" stroke="#a01818" /><path d="M7 7h9v9H7z" fill="#5aaa5a" stroke="#e6f0e6" /></>],
  ["画线", <><path d="M4 12 12 2l3 3-8 9-4 1z" fill="#eb4628" stroke="#a82810" /><path d="m4 12 3 2-4 1z" fill="#ffd29c" /><path d="M4 17h11" stroke="#e02828" /></>],
  ["预警", <><path d="M5 2c5-1 7 3 7 8l4 3-6 3-8-6c2-1 2-5 3-8z" fill="#dc9632" stroke="#7a4808" /><ellipse cx="9" cy="13" rx="6" ry="2" transform="rotate(32 9 13)" fill="#8c5a1e" stroke="#5a3408" /></>],
  ["筛选", <><path d="M2 3h14l-5 6v7H8V9z" fill="#969696" stroke="#555" /><ellipse cx="9" cy="4" rx="7" ry="2.5" fill="#dc3232" /><path d="M9 9v7" stroke="#eee" /></>],
];

const periodButtons: [string, keyof typeof badge][] = [
  ["Tick", "red"], ["日", "gold"], ["周", "gold"], ["月", "gold"], ["季", "gold"], ["X", "gold"],
  ["1", "green"], ["3", "green"], ["5", "green"], ["15", "green"], ["30", "green"], ["60", "green"],
  ["2hr", "green"], ["4hr", "green"], ["Y", "green"],
];

const NewMark = styled.span`
  position: relative;
  color: #2a82e6;
  font: 13px/18px ${CJK};
  &::after {
    content: "";
    position: absolute;
    top: 0;
    right: -4px;
    width: 6px;
    height: 6px;
    border-radius: 50%;
    background: #f01414;
  }
`;

/* ---------- drawing tool icons, centred on the origin ---------- */

const K = "#111";
const dot = (x: number, y: number) => <rect x={x - 1} y={y - 1} width="2" height="2" fill={K} />;
const stroke = (d: string, color = K, dash?: string) => <path d={d} fill="none" stroke={color} strokeDasharray={dash} />;
const arrow = (angle: number, fill: string) => (
  <path d="M0-5 5 0H3v5h-6V0h-2z" transform={`rotate(${angle})`} fill={fill} stroke={K} />
);
const diagonal = (angle: number, fill: string) => (
  <path d="M5.500-5.500v7l-2-2-5.500 5.500-3-3 5.500-5.500-2-2z" transform={`rotate(${angle})`} fill={fill} stroke={K} />
);
const eye = <><path d="M-7 0Q0-7 7 0 0 7-7 0z" fill="#ddd" stroke="#444" /><circle r="3" fill="#222" /><circle cx="-1" cy="-1" r="1" fill="#fff" /></>;

const drawIcons: [string, React.ReactNode][] = [
  ["直线", stroke("M-6-6 6 6")],
  ["线段", <>{stroke("M-6 6 6-6")}{dot(-5, 5)}{dot(1, -1)}</>],
  ["反向线段", <>{stroke("M-6-6 6 6")}{dot(-5, -5)}{dot(5, 5)}</>],
  ["平行线", stroke("M-6-3 3 6M-3-6 6 3")],
  ["多平行线", <>{stroke("M-7 2 2-7M-7 7 7-7M-1 6 7-2", BLUE)}{dot(-3, 3)}{dot(3, 3)}{dot(3, -3)}</>],
  ["水平线", stroke("M-7 .5H7M-6.5-1v3")],
  ["垂直线", stroke("M.5-7V7M-2-6.5h5")],
  ["射线", <>{stroke("M-6 6 6-6")}{dot(-5, 5)}</>],
  ["反向射线", <>{stroke("M-6-6 6 6")}{dot(-5, -5)}</>],
  ["箭头线", <>{stroke("M-5 5 6-6M1-5.5h4.5v4.5", BLUE)}{dot(-5, 5)}</>],
  ["矩形", stroke("M-4.500-3.500h9v7h-9z")],
  ["三角形", <>{stroke("M-6 3 0-3 6 3", BLUE)}{stroke("M-7 3.5H7")}</>],
  ["椭圆", <ellipse rx="6" ry="4.5" fill="none" stroke="#3c78c8" />],
  ["正弦线", stroke("M-5-1C-4-8-1-7 0 0S4 8 5 1")],
  ["弧线", <>{stroke("M-7 4a7 7 0 0 1 14 0M-4 4a4 4 0 0 1 8 0M-1 4a2 2 0 0 1 4 0", BLUE)}{stroke("M-2 4 7-6")}</>],
  ["半圆", stroke("M-5-4.5h6a4.5 4.5 0 0 1 0 9h-6")],
  ["波浪尺", <>{stroke("M-7 6-2 1l3 4")}{stroke("M3.500-7V7M1-5.500h6M1-1.500h6M1 2.500h6M1 5.500h6", BLUE)}</>],
  ["黄金分割", <>{stroke("M-7-5.5H7M-7 6.5H7")}{stroke("M0-2.5h7M0 .5h7M0 3.5h7M-2-2.500h-4v5h4v-2h-2", BLUE)}</>],
  ["百分比线", <>{stroke("M-7-5.5H7M-7 6.5H7")}{stroke("M0-2.5h7M0 .5h7M0 3.5h7M-6 2l4-5M-6-2h1M-2 2h-1", BLUE)}</>],
  ["周期线", <>{stroke("M-5.5-6V6", BLUE)}{stroke("M-2.5-6V6M1.5-6V6M5.5-6V6")}</>],
  ["斐波那契线", <>{stroke("M-6.5-6V6", BLUE)}{stroke("M-4.5-6V6M-2.5-6V6M1.5-6V6M6.5-6V6")}</>],
  ["时间窗", <>{stroke("M-5.5-6V6M-2.5-6V6M1.5-6V6", BLUE)}{stroke("M4.5-6V6", K, "1 1")}</>],
  ["速阻线", <>{stroke("M6-6-6 5.5H6")}{stroke("M-6 5.5 6 0", BLUE)}</>],
  ["江恩线", <>{stroke("M-5.5-7V5.5H7")}{stroke("M-5 5-3-7M-5 5 2-7M-5 5 7-6M-5 5 7-1M-5 5 7 3", BLUE)}</>],
  ["通道线", <>{stroke("M-5.5-5V7M6.5-7V5")}{stroke("M-5-3 6-6M-5 1 6-3M-5 5 6 1", BLUE)}</>],
  ["回归通道", <>{stroke("M-5.5-5V7M2.5-7V5M-5 3 6 0")}{stroke("M-5-1 6-5M-5 6 6 3", BLUE)}</>],
  ["测量线", <>{stroke("M-6-6.5H6M-6 6.5H6M-6 .5H6")}{stroke("M0-5V6M-2-3 0-5l2 2M-2 4l2 2 2-2", BLUE)}</>],
  ["文字", <text y="6" textAnchor="middle" fontFamily="Noto Sans, sans-serif" fontSize="16" fill={K}>A</text>],
  ["标尺", <><path d="M-7.5-3.5h15v6h-15z" fill="#8cb4f0" stroke="#1e3c78" />{stroke("M-5-3v2M-3-3v3M-1-3v2M1-3v3M3-3v2M5-3v3", "#1e3c78")}</>],
  ["罗盘", <><circle r="7" fill="#fff" stroke="#5a8296" strokeWidth="1.5" /><circle r="5" fill="none" stroke="#d22" strokeWidth="2" strokeDasharray="1.5 1.5" /><circle r="2.5" fill="#bbb" /></>],
  ["上箭头", arrow(0, "#f04010")],
  ["右上箭头", diagonal(0, "#ff0000")],
  ["左上箭头", diagonal(-90, "#ff0000")],
  ["下箭头", arrow(180, "#6ab428")],
  ["右下箭头", diagonal(90, "#6ab428")],
  ["左下箭头", diagonal(180, "#6ab428")],
  ["橡皮", <><path d="M-7 3 0-5h6L0 4h-7z" fill="#f0d21e" stroke={K} /><path d="M0 4h6v-2H2z" fill="#777" />{stroke("M-6 4h7")}</>],
  ["移动", <><path d="M-7-1-3-5v3h4v2h-4v3z" fill={BLUE} /><path d="M2-6h4v2H2zM2-2h4v3H2zM-6 3h6v3h-6z" fill="#f04010" />{stroke("M2 3.5h4M2 6.5h4")}</>],
  ["隐藏", <>{eye}{stroke("M-6 6 6-6", "#222")}</>],
  ["全部隐藏", <g opacity=".7">{eye}{stroke("M-6 5 6-5M-6-5 6 5", "#222")}</g>],
  ["显示", <g transform="scale(.9)">{eye}</g>],
  ["设置", <><circle r="5" fill={K} /><circle r="6" fill="none" stroke={K} strokeWidth="3" strokeDasharray="2.7 2" /><circle r="2.5" fill={K} stroke="#fff" /></>],
];

/* ---------- quote data ---------- */

const asks: [string, string, string][] = [["卖五", "3579", "87"], ["卖四", "3578", "347"], ["卖三", "3577", "134"], ["卖二", "3576", "90"], ["卖一", "3575", "55"]];
const bids: [string, string, string][] = [["买一", "3574", "410"], ["买二", "3573", "484"], ["买三", "3572", "446"], ["买四", "3571", "399"], ["买五", "3570", "904"]];

const stats: [string, string, string, string, string, string][] = [
  ["最新", "3575", GREEN, "结算", "3617", GREEN],
  ["涨跌", "-111", GREEN, "昨结", "3686", WHITE],
  ["幅度", "-3.01%", GREEN, "开盘", "3652", GREEN],
  ["总手", "1170412", YELLOW, "最高", "3667", GREEN],
  ["现手", "4", YELLOW, "最低", "3574", GREEN],
  ["涨停", "3907", UP, "跌停", "3464", GREEN],
  ["持仓", "1172886", YELLOW, "仓差", "-129924", YELLOW],
  ["外盘", "553986", UP, "内盘", "616426", GREEN],
];

const ticks = `14:59 3576 72 +12 空开 g|:45 3576 60 -8 多平 g|:45 3576 46 -24 多平 g|:46 3576 38 -2 空平 r|:48 3576 38 -14 空平 r|:49 3575 80 -52 多平 g|:50 3576 50 -22 空平 r|:50 3576 58 -54 空平 r|:51 3575 104 -2 多平 g|:52 3575 22 +12 空开 g|:52 3576 210 -122 空平 r|:53 3575 134 +32 空开 g|:53 3576 62 +52 多开 r|:54 3575 34 +2 空开 g|:54 3575 44 -10 多平 g|:55 3576 430 -112 空平 r|:55 3575 150 -110 多平 g|:56 3577 162 -46 空平 r|:56 3577 130 -6 空平 r|:57 3575 84 -50 多平 g|:57 3575 82 -36 多平 g|:58 3575 48 -18 多平 g|:59 3574 52 -18 多平 g`
  .split("|")
  .map((r) => r.split(" "));

const Book = ({ rows, best }: { rows: [string, string, string][]; best: string }) => (
  <BookTable>
    <colgroup><col width="40" /><col width="73" /><col /></colgroup>
    <tbody>
      {rows.map(([label, price, volume]) => (
        <tr key={label}>
          <HeadCell $left scope="row">{label}</HeadCell>
          <Cell $color={GREEN} $big={label === best}>{price}</Cell>
          <Cell $color={YELLOW} $left $pad={14} $big={label === best}>{volume}</Cell>
        </tr>
      ))}
    </tbody>
  </BookTable>
);

const Quotes = () => (
  <QuotePanel>
    <QuoteTitle>
      <span>螺纹1910(rb1910)</span>
      <svg width="17" height="13" viewBox="0 0 17 13" fill="none" stroke="#7ab8ff" aria-hidden="true"><path d="M.5.5h15v12H.5zM4.5 3.5h8v6h-8z" /></svg>
    </QuoteTitle>
    <RatioBar><RatioSell /></RatioBar>
    <Book rows={asks} best="卖一" />
    <Book rows={bids} best="买一" />
    <BookTable>
      <colgroup><col width="40" /><col width="73" /><col width="47" /><col /></colgroup>
      <tbody>
        {stats.map(([a, av, ac, b, bv, bc]) => (
          <tr key={a}>
            <HeadCell $left scope="row">{a}</HeadCell>
            <Cell $color={ac}>{av}</Cell>
            <HeadCell $left $pad={13} scope="row">{b}</HeadCell>
            <EndCell $color={bc}>{bv}</EndCell>
          </tr>
        ))}
      </tbody>
    </BookTable>
    <Table>
      <colgroup><col width="40" /><col width="65" /><col width="47" /><col width="49" /><col /></colgroup>
      <thead>
        <tr>
          <HeadCell $left $dim>北京</HeadCell>
          <HeadCell $dim>价格</HeadCell>
          <HeadCell $dim>√大单</HeadCell>
          <HeadCell $dim>仓差</HeadCell>
          <HeadCell $left $dim $pad={8}>性质</HeadCell>
        </tr>
      </thead>
      <tbody>
        {ticks.map(([time, price, volume, delta, kind, tone], k) => {
          const color = tone === "g" ? GREEN : UP;
          return (
            <tr key={k}>
              {k === 0 ? <Cell $tall>{time}</Cell> : <TimeCell>{time}</TimeCell>}
              <Cell $tall $color={GREEN}>{price}</Cell>
              <Cell $tall $color={color}>{volume}</Cell>
              <Cell $tall $color={YELLOW}>{delta}</Cell>
              <KindCell $color={color}>{kind}</KindCell>
            </tr>
          );
        })}
      </tbody>
    </Table>
    <QuoteTabs><QuoteTab type="button">笔</QuoteTab><TabRule /></QuoteTabs>
  </QuotePanel>
);

/* ---------- floating windows ---------- */

const DropArrow = () => (
  <svg width="14" height="17" viewBox="0 0 14 17" aria-hidden="true">
    <path d="M0 0h14v17H0z" fill="#b9d0fb" />
    <path d="m3.5 7 3.5 3.5L10.500 7" fill="none" stroke="#46648c" strokeWidth="2.500" />
  </svg>
);

const DrawPalette = () => (
  <Palette>
    <PaletteTitle>画线<PaletteClose type="button" aria-label="关闭画线">x</PaletteClose></PaletteTitle>
    <PaletteBody>
      <ToolGrid>
        {drawIcons.map(([name, art]) => (
          <DrawButton key={name} type="button" aria-label={name} $on={name === "射线"}>
            <svg width="16" height="16" viewBox="-8 -8 16 16">{art}</svg>
          </DrawButton>
        ))}
        <span />
        <DrawButton type="button" aria-label="收起">
          <svg width="18" height="18" viewBox="-9 -9 18 18" fill="none" stroke="#888"><circle r="8" />{stroke("M-3-1 0-4l3 3M-3 4l3-3 3 3", "#555")}</svg>
        </DrawButton>
      </ToolGrid>
      <Field>颜色<Swatch type="button" aria-label="颜色" /></Field>
      <Field>粗细<SelectBox><select aria-label="粗细"><option>————</option></select><DropArrow /></SelectBox></Field>
      <Field>线型<SelectBox><select aria-label="线型"><option>————</option></select><DropArrow /></SelectBox></Field>
      <CheckField><input type="checkbox" defaultChecked />自动吸附</CheckField>
    </PaletteBody>
  </Palette>
);

const formRows: [string, string][] = [
  ["起始时间", "2019-06-28"], ["结束时间", "2019-08-27"], ["期初价", "3857"], ["最高价", "4148"], ["最低价", "3538"],
  ["期末价", "3575"], ["成交量", "149221086"], ["仓差", "-1389758"], ["加权均价", "3872"], ["区间涨幅", "-12.05%"], ["区间振幅", "15.01%"],
];

const sideNotes: Record<number, string> = { 6: "分析周期", 7: "共10个" };

const IntervalDialog = () => (
  <Dialog role="dialog" aria-label="区间统计">
    <DialogTitle>
      螺纹1910 区间统计
      <CloseButton type="button" aria-label="关闭窗口">
        <svg width="11" height="11" viewBox="0 0 11 11" stroke="#888"><path d="m.5.5 10 10m0-10-10 10" /></svg>
      </CloseButton>
    </DialogTitle>
    <DialogForm>
      <FormGrid>
        {formRows.map(([label, value], k) => (
          <React.Fragment key={label}>
            <FormLabel htmlFor={`stat-${k}`}>{label}</FormLabel>
            <FormField>
              <input id={`stat-${k}`} defaultValue={value} />
              {k < 2 && (
                <Spinner type="button" aria-label="调整日期">
                  <svg width="16" height="18" viewBox="0 0 16 18" fill="#46648c"><path d="M8 4l4 4H4zM8 15l4-4H4z" /></svg>
                </Spinner>
              )}
            </FormField>
            <Side>{sideNotes[k]}</Side>
          </React.Fragment>
        ))}
      </FormGrid>
      <DialogActions><OkButton type="button">关闭</OkButton></DialogActions>
    </DialogForm>
  </Dialog>
);

/* ---------- page ---------- */

const sideTabs = ["技术分析", "国内期货", "股指期货", "期权报价", "期权策略", "热点排名", "新闻资讯"];

const readout: [string, string][] = [
  ["开    盘", "#00e600"], ["最    高", "#ff3c3c"], ["最    低", "#00e600"], ["收    盘", "#ff3c3c"],
  ["成 交 量", "#ffff00"], ["持    仓", "#ffff00"], ["涨    跌", "#ff3c3c"], ["幅    度", "#ff3c3c"],
];

export default function App() {
  return (
    <>
      <Global />
      <Shell>
        <MenuBar>
          <MenuItem href="#">系统</MenuItem>
          <MenuItem href="#">页面</MenuItem>
          <MenuItem href="#">分析</MenuItem>
          <MenuItem href="#">新闻</MenuItem>
          <MenuItem href="#" $color="#f01414" $bold $gap={36}>特色功能</MenuItem>
          <MenuItem href="#">徽期货专栏</MenuItem>
          <MenuItem href="#">交易</MenuItem>
          <MenuItem href="#">工具</MenuItem>
          <MenuItem href="#" $gap={0}>帮助</MenuItem>
          <Brand>
            <MenuItem as="span" $color="#ff5a14" $size={15} $gap={20}>博易大师</MenuItem>
            <MenuItem as="span" $color="#ff5a14" $size={15}>徽期货</MenuItem>
          </Brand>
          <MenuButton type="button">交易</MenuButton>
          <MenuButton type="button">论坛</MenuButton>
        </MenuBar>

        <Toolbar>
          {toolIcons.map(([name, art]) => (
            <ToolButton key={name} type="button" aria-label={name} $on={name === "画线"}><Icon>{art}</Icon></ToolButton>
          ))}
          <ToolButton type="button"><NewMark>新</NewMark></ToolButton>
          <ToolSeparator />
          <ToolButton type="button" aria-label="报价表">
            <Icon><path d="M1.500 1.500h15v15h-15z" fill="#fff" stroke="#333" /><path d="M2 2h14v3H2z" fill="#f0c83c" /><path d="M2 5.500h14M9 6v10" stroke="#333" /><path d="M3 8.500h5M3 13.500h5" stroke="#222" /><path d="M10 8.500h5M3 11h5M10 13.500h5" stroke="#d22" /></Icon>
          </ToolButton>
          <ToolButton type="button" aria-label="走势图">
            <Icon><path d="M2 16v-4h3v4zM7 16v-5h3v5zM12 16V8h3v8z" fill="#f06428" /><path d="m1 11 5-4 3 2 6-7m-5 0h6v5" fill="none" stroke="#dc1e1e" strokeWidth="2" /></Icon>
          </ToolButton>
          {periodButtons.map(([text, tone]) => (
            <ToolButton key={text} type="button" $on={text === "周"}>
              <Badge $tone={tone} $small={text.length > 2}>{text}</Badge>
            </ToolButton>
          ))}
        </Toolbar>

        <Body>
          <Sidebar>
            {sideTabs.map((name, k) => (
              <SideTab key={name} type="button" $on={k === 0}>
                {[...name].map((c, n) => <span key={n}>{c}</span>)}
                <svg width="13" height="23" viewBox="0 0 13 23" aria-hidden="true">
                  {k === 0 && <path d="M4 1v8l4-4z" fill="#fff" />}
                  <path d="M0 13 13 22H0z" fill="#d2d2d2" />
                  <path d="M0 13 13 22.500H0" fill="none" stroke="#777" />
                </svg>
              </SideTab>
            ))}
          </Sidebar>

          <ChartArea>
            <ChartHeader>
              <ChartTitle>螺纹<Mono>1910(010610)&lt;</Mono>周线<Mono>&gt;</Mono></ChartTitle>
              <HeaderLink href="#">商品叠加</HeaderLink>
              <HeaderLink href="#">周期</HeaderLink>
              {["M1 6 6 2v2h6v4H6v2z", "M13 6 8 2v2H2v4h6v2z", "M0 9h9M9 0v12M11 2h2M11 5h2M11 8h2"].map((d, k) => (
                <NavButton key={d} type="button" aria-label={["左移", "右移", "布局"][k]}>
                  <svg width="14" height="12" viewBox="0 0 14 12" fill="none" stroke="#7ab8ff"><path d={d} /></svg>
                </NavButton>
              ))}
            </ChartHeader>

            <Panel
              top={53}
              height={421}
              axis={[[71, "5000"], [309, "3500"], [388, "3000"]]}
              grid={[71, 150, 229, 308, 387]}
              legend={[
                ["K", GREY, true], ["MA5:3682", "#ffffff"], ["MA13:3824", YELLOW], ["MA21:3808", "#ff00ff"], ["MA34:3680", "#00ff00"],
                ["MA55:3753", "#7878ff"], ["MA89:3728", "#ff8000"], ["MA144:3589", "#32a0dc"], ["MA233:3043", "#dc2846", true],
                ["SAR(10,2,20)", GREY, true], ["SARUP:0", "#ff0000"], ["SARDOWN:4112", "#00ff00", true], ["SSLO 3612", GREY, true],
                ["BOLL(26,2)", GREY, true], ["MID:3753", YELLOW], ["UPPER:4082", "#ff00ff"], ["LOWER:3424", "#00ff00"],
              ]}
            >
              <PricePlot />
            </Panel>

            <Panel
              top={475}
              height={106}
              axis={[[533, "1500万"]]}
              grid={[532]}
              legend={[["VOL(5,10)", GREY, true], ["VOLUME:2473868.0000", GREY], ["MAVOL1:12464397.6000", "#ffffff"], ["MAVOL2:14922108.6000", YELLOW]]}
            >
              <g shapeRendering="crispEdges">{VOLUME.map(({ up, y }, i) => <Bar key={i} i={i} y={y} base={578} up={up} />)}</g>
              <Line color="#fff" data="0,576 2,577 9,577 12,576 16,576 22,576 23,576 24,574 25,570 26,562 27,554 28,540 29,524 30,516 31,516 32,512 33,515 34,521 35,522 36,519 38,521 39,522 41,519 43,522 44,524 45,528 46,535 47,543 48,549 52,572 58,576 76,576 77,572 78,560 79,545 80,534 81,534 82,529 84,530 86,530 87,528 88,529 89,527 90,526 91,522 92,524 93,524 94,528 95,529 96,529 97,533 98,541" />
              <Line color={YELLOW} data="0,547 1,557 2,567 3,574 4,577 23,577 24,576 25,573 26,569 27,565 28,558 29,549 30,542 31,539 32,533 34,523 35,521 36,517 37,516 39,520 40,521 41,519 43,521 45,523 46,527 47,532 48,536 54,566 60,576 76,576 77,574 78,566 79,559 80,554 81,551 82,547 83,542 84,537 85,534 86,531 87,529 90,528 91,525 93,526 95,527 96,526 97,528 98,532" />
            </Panel>

            <Panel
              top={582}
              height={95}
              axis={[[634, "0"]]}
              grid={[633]}
              legend={[["MACD(12,26,9)", GREY, true], ["DIFF:11.8835", "#ffffff"], ["DEA:48.9533", YELLOW], ["MACD:-74.1396", GREY]]}
            >
              <g shapeRendering="crispEdges">{MACD_BARS.map((y, i) => <Stem key={i} i={i} y={y} base={633.5} />)}</g>
              <Line color="#fff" data="0,598 1,599 2,602 3,608 4,613 5,617 7,622 9,624 11,626 15,629 18,627 22,625 24,628 25,633 26,637 27,639 29,640 30,639 31,638 33,636 39,627 40,627 42,624 44,618 45,616 46,612 47,608 48,607 54,606 60,640 66,654 68,654 71,651 74,646 77,639 79,635 81,630 84,627 87,628 88,626 89,623 92,620 93,620 94,622 95,626 97,629 98,632" />
              <Line color={YELLOW} data="0,603 2,602 4,605 7,613 10,619 13,622 16,625 20,626 24,626 26,629 28,633 30,635 33,636 39,631 42,628 45,624 47,619 48,616 56,610 62,638 66,652 68,654 70,653 75,649 79,642 82,637 85,633 88,629 91,625 94,624 96,625 98,627" />
            </Panel>

            <Panel
              top={678}
              height={95}
              axis={[[736, "0"]]}
              grid={[735]}
              legend={[["SHORT(10)", GREY, true], ["SHORT:-71.2432", GREY], ["-71.2432", "#ffffff"], ["MA1:-32.0846", YELLOW]]}
            >
              <g shapeRendering="crispEdges">
                {Array.from({ length: 99 }, (_, i) => <Stem key={i} i={i} y={valueAt(shortPoints, i)} base={735.5} />)}
              </g>
              <Line color="#fff" data={SHORT_LINE} />
              <Line color={YELLOW} data="0,696 2,706 4,721 6,732 8,740 10,746 13,752 15,754 18,755 22,755 25,757 27,756 29,751 31,742 32,738 36,722 39,723 41,727 42,727 43,725 44,722 46,720 50,718 52,721 53,725 54,728 56,736 58,741 60,747 63,750 65,752 67,752 70,751 76,749 78,745 80,743 82,740 84,737 86,736 88,738 90,735 93,735 95,740 97,741 98,743" />
            </Panel>

            <Panel
              top={774}
              height={103}
              axis={[[801, "0.8"], [847, "0.4"]]}
              grid={[800, 846]}
              legend={[["ADTM(23,8)", GREY, true], ["ADTM:0.4537", "#ffffff"], ["MA1:0.5697", YELLOW]]}
            >
              <Line color="#fff" data="0,811 1,806 2,802 3,804 4,808 5,813 6,815 7,803 8,799 9,798 10,798 11,803 12,808 13,812 14,814 15,808 16,815 17,821 18,822 19,827 20,833 21,838 22,828 23,812 24,817 25,864 26,874 27,854 28,849 29,851 30,847 31,837 32,842 36,850 39,848 40,851 41,855 42,846 43,839 44,835 45,835 46,828 47,816 48,796 49,793 52,791 53,793 56,793 57,794 58,796 59,803 60,814 61,818 62,810 63,811 64,809 65,813 67,814 68,814 70,824 71,825 72,821 73,824 74,832 75,838 76,834 77,861 78,844 79,835 80,825 81,821 82,810 84,797 85,797 86,803 87,807 88,802 90,799 92,805 93,806 94,821 95,846 96,851 97,841 98,840" />
              <Line color={YELLOW} data="0,816 2,810 4,807 6,808 8,806 10,804 12,805 14,804 15,805 16,807 18,813 19,815 21,822 22,824 24,825 25,830 26,837 28,842 30,846 32,852 36,850 39,847 41,848 43,845 46,842 47,838 48,831 50,816 52,805 54,795 55,793 57,793 59,794 60,797 62,803 65,809 67,813 69,813 71,817 73,820 75,825 76,827 77,833 78,835 79,837 81,836 82,834 83,829 84,825 85,817 87,808 90,801 92,802 93,803 94,805 95,810 97,821 98,826" />
            </Panel>

            <Panel
              top={878}
              height={109}
              active
              axis={[[919, "100"], [938, "0"], [958, "-100"]]}
              grid={[919, 938, 958]}
              legend={[["CCI(14)", GREY, true], ["-108.9652", "#ffffff"]]}
            >
              <Line color="#fff" data="0,928 1,931 2,938 3,955 4,963 5,963 6,956 7,958 9,946 11,946 12,942 13,943 14,939 15,934 16,914 17,899 18,903 19,911 20,916 21,915 22,911 23,938 24,955 25,984 26,976 27,964 28,956 29,951 30,943 31,933 32,934 33,932 34,938 35,928 37,922 39,924 40,924 41,914 42,910 43,903 44,903 45,909 46,905 47,907 48,917 49,918 50,920 51,919 52,922 53,917 54,954 55,975 56,973 57,970 58,964 59,960 60,960 61,955 62,952 63,950 64,951 65,950 66,945 67,936 68,923 69,917 70,919 71,918 72,915 73,918 74,927 75,927 76,934 77,923 78,895 79,901 80,908 81,911 82,921 83,925 84,916 85,924 86,933 88,926 89,897 90,899 91,911 92,918 93,927 94,943 95,962 96,959 97,954 98,959" />
            </Panel>

            <TimeRow>
              <TimeUnit>周线</TimeUnit>
              <TimeScale>
                {TIMES.map(([x, text]) => (
                  <TimeLabel key={x} style={{ left: `${((x - LEFT) / SPAN) * 100}%` }}>{text}</TimeLabel>
                ))}
              </TimeScale>
            </TimeRow>
          </ChartArea>

          <Quotes />
        </Body>
        <StatusBar />

        <Readout>
          <ReadoutDate />
          {readout.map(([label, color]) => <ReadoutRow key={label} $color={color}>{label}</ReadoutRow>)}
        </Readout>

        <Logo>
          <svg width="32" height="28" viewBox="0 0 32 28" aria-hidden="true">
            <rect width="32" height="28" rx="4" fill="#e8581c" />
            <ellipse cx="16" cy="14" rx="12.500" ry="11.500" fill="none" stroke="#fff" strokeWidth="2" />
            <path d="M9 9h14M5 14h22M16 9v11M11 21h10M11 17v4M21 17v4" fill="none" stroke="#fff" strokeWidth="2" />
          </svg>
          <div>
            <LogoText>5e天资</LogoText>
            <LogoUrl>5etz.com</LogoUrl>
          </div>
        </Logo>

        <DrawPalette />
        <IntervalDialog />
      </Shell>
    </>
  );
}
